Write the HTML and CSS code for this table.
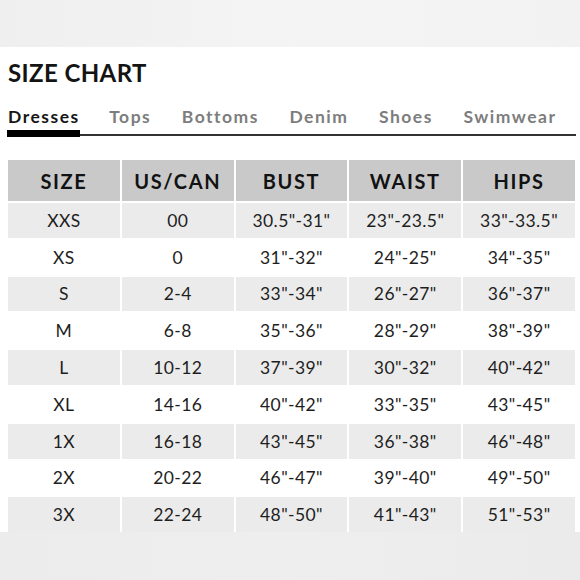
FILE: index.html
```html
<!DOCTYPE html>
<html>
<head>
<meta charset="utf-8">
<link rel="stylesheet" href="styles.css">
</head>
<body>
<div class="top-band"></div>
<main class="content">
  <h1 class="title">SIZE CHART</h1>
  <nav class="tabs">
    <span class="tab active">Dresses</span>
    <span class="tab">Tops</span>
    <span class="tab">Bottoms</span>
    <span class="tab">Denim</span>
    <span class="tab">Shoes</span>
    <span class="tab">Swimwear</span>
  </nav>
  <div class="chart">
    <div class="row head"><div>SIZE</div><div>US/CAN</div><div>BUST</div><div>WAIST</div><div>HIPS</div></div>
    <div class="row shade"><div>XXS</div><div>00</div><div>30.5"-31"</div><div>23"-23.5"</div><div>33"-33.5"</div></div>
    <div class="row"><div>XS</div><div>0</div><div>31"-32"</div><div>24"-25"</div><div>34"-35"</div></div>
    <div class="row shade"><div>S</div><div>2-4</div><div>33"-34"</div><div>26"-27"</div><div>36"-37"</div></div>
    <div class="row"><div>M</div><div>6-8</div><div>35"-36"</div><div>28"-29"</div><div>38"-39"</div></div>
    <div class="row shade"><div>L</div><div>10-12</div><div>37"-39"</div><div>30"-32"</div><div>40"-42"</div></div>
    <div class="row"><div>XL</div><div>14-16</div><div>40"-42"</div><div>33"-35"</div><div>43"-45"</div></div>
    <div class="row shade"><div>1X</div><div>16-18</div><div>43"-45"</div><div>36"-38"</div><div>46"-48"</div></div>
    <div class="row"><div>2X</div><div>20-22</div><div>46"-47"</div><div>39"-40"</div><div>49"-50"</div></div>
    <div class="row shade"><div>3X</div><div>22-24</div><div>48"-50"</div><div>41"-43"</div><div>51"-53"</div></div>
  </div>
</main>
<div class="bottom-band"></div>
</body>
</html>
```
FILE: styles.css
```css
html, body {
  margin: 0;
  padding: 0;
  background: #ffffff;
  font-family: "Lato", "Liberation Sans", sans-serif;
  color: #1a1a1a;
}
body {
  width: 580px;
  height: 580px;
  overflow: hidden;
  display: flex;
  flex-direction: column;
}
.top-band {
  height: 47px;
  flex: none;
  background: linear-gradient(90deg, #efefef, #f4f4f4 50%, #f2f2f2);
}
.content {
  padding: 0 5px 0 8px;
  flex: none;
}
.title {
  margin: 12px 0 0 0;
  font-size: 24px;
  line-height: 28px;
  font-weight: 700;
  letter-spacing: 0.4px;
  color: #141414;
}
.tabs {
  margin-top: 19px;
  display: flex;
  gap: 30.5px;
  border-bottom: 2px solid #333;
  width: 568px;
  margin-left: -1px;
  padding-left: 1px;
}
.tab {
  font-size: 17.5px;
  line-height: 22px;
  font-weight: 700;
  letter-spacing: 1.5px;
  color: #7d7d7d;
  padding-bottom: 2px;
  margin-bottom: -3px;
  border-bottom: 7px solid transparent;
}
.tab.active {
  color: #161616;
  border-bottom-color: #000;
  margin-left: -1px;
  padding-left: 1px;
  margin-right: -1px;
}
.chart {
  margin-top: 24px;
  display: flex;
  flex-direction: column;
  gap: 2px;
  width: 567px;
}
.row {
  display: grid;
  grid-template-columns: repeat(5, 1fr);
  column-gap: 2px;
  height: 34.8px;
}
.row > div {
  display: flex;
  align-items: center;
  justify-content: center;
  font-size: 17.5px;
  letter-spacing: 0.4px;
  color: #1e1e1e;
}
.row.head {
  height: 41px;
}
.row.head > div {
  background: #c9c9c9;
  font-size: 20px;
  font-weight: 700;
  letter-spacing: 1.6px;
  color: #121212;
}
.row.shade > div {
  background: #ebebeb;
}
.bottom-band {
  flex: 1;
  background: linear-gradient(90deg, #ececec, #eeeeee 50%, #ebebeb);
}
```
